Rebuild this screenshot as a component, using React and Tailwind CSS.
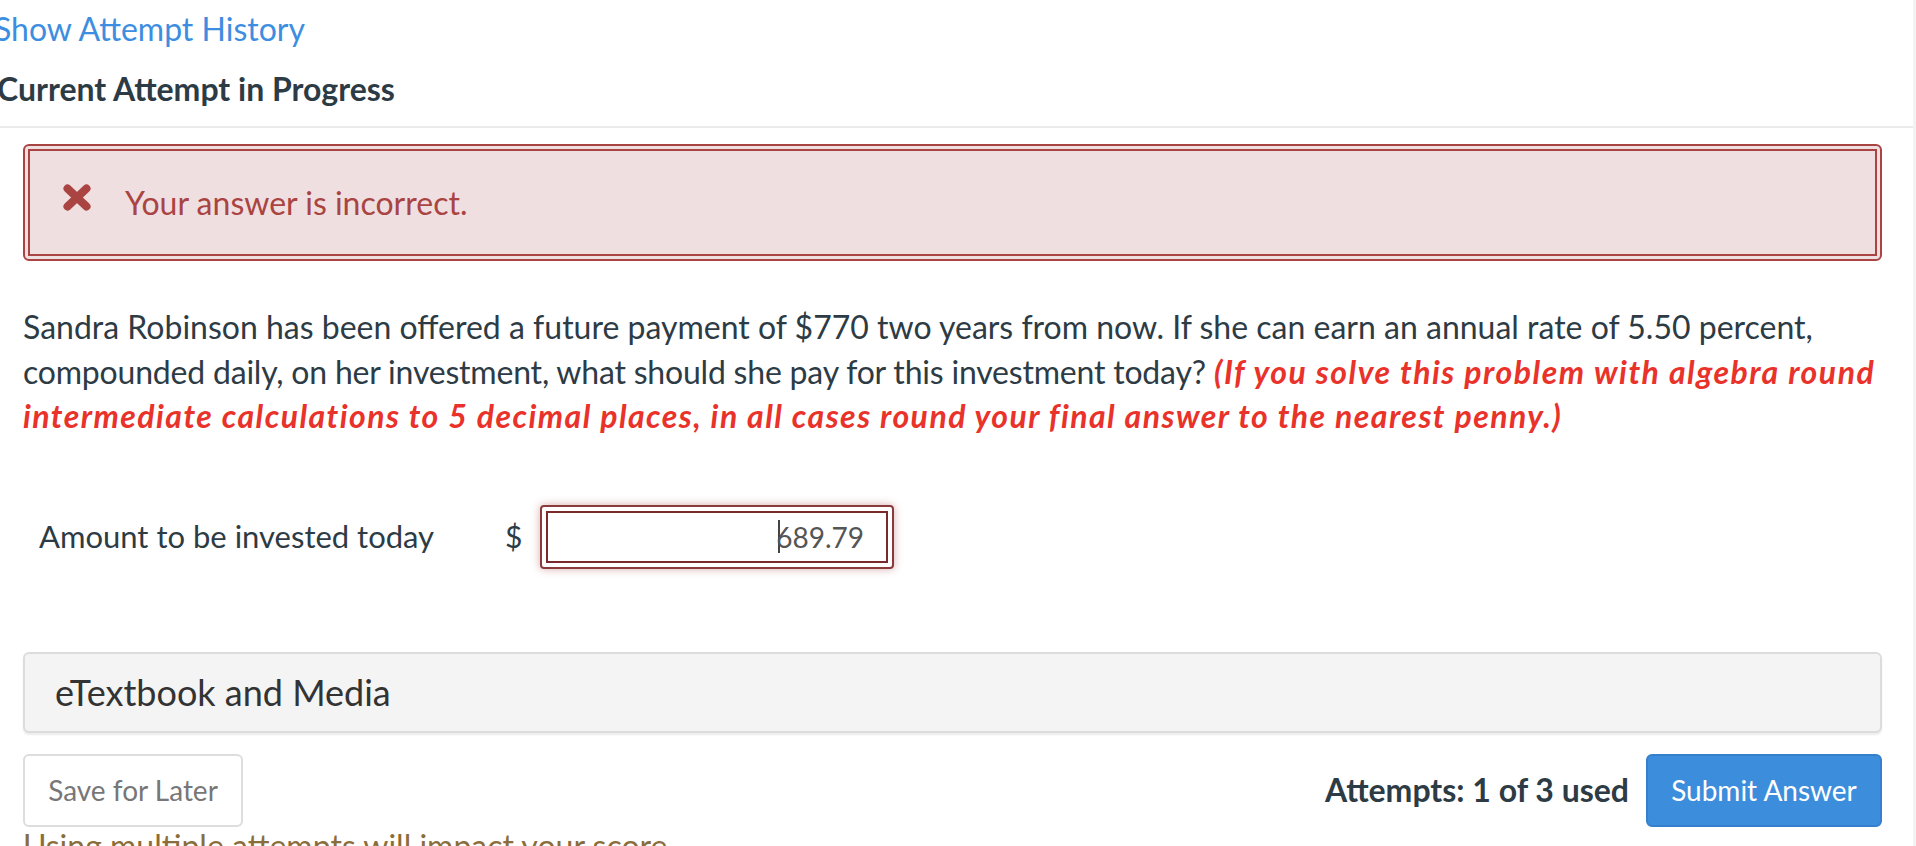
import React from 'react';

const TimesIcon = () => (
  <svg width="30" height="27" viewBox="0 0 30 27" className="mb-[10px] shrink-0">
    <path d="M5.5 4.5 L24.5 22.5 M24.5 4.5 L5.5 22.5" stroke="#a94442" strokeWidth="8" strokeLinecap="round" />
  </svg>
);

const App = () => {
  return (
    <div className="flex min-h-screen bg-white font-['Lato','Open_Sans',sans-serif] text-[#2d3b45]">
      <div className="flex-1 overflow-hidden">
        {/* Header */}
        <div className="-ml-[6px] pt-[8px] text-[32px] leading-[42px] text-[#3d8ee0]">Show Attempt History</div>
        <div className="-ml-[3px] mt-[18px] text-[32px] font-bold leading-[42px]">Current Attempt in Progress</div>
        <div className="mt-[16px] h-[2px] bg-[#ebebeb]" />

        <div className="pl-[23px] pr-[31px]">
          {/* Error alert */}
          <div className="mt-[16px] rounded-[6px] border-2 border-[#a94442] bg-[#f0dfe0] p-[3px]">
            <div className="flex h-[107px] items-center gap-[33px] border-2 border-[#a94442] pl-[32px] text-[32px] text-[#a94442]">
              <TimesIcon />
              <span>Your answer is incorrect.</span>
            </div>
          </div>

          {/* Question */}
          <p className="mt-[44px] whitespace-nowrap text-[32px] leading-[44.5px]">
            Sandra Robinson has been offered a future payment of $770 two years from now. If she can earn an annual rate of 5.50 percent,
            <br />
            <span className="tracking-[-0.2px]">compounded daily, on her investment, what should she pay for this investment today?</span>{' '}
            <span className="font-bold italic tracking-[1.5px] text-[#e8322a]">(If you solve this problem with algebra round</span>
            <br />
            <span className="font-bold italic tracking-[1.45px] text-[#e8322a]">
              intermediate calculations to 5 decimal places, in all cases round your final answer to the nearest penny.)
            </span>
          </p>

          {/* Answer row */}
          <div className="mt-[66px] flex items-center">
            <div className="w-[482px] pl-[16px] text-[31px]">Amount to be invested today</div>
            <div className="w-[35px] text-[30px]">$</div>
            <div className="h-[64px] w-[354px] rounded-[4px] border-2 border-[#8a3a3a] p-[4px] shadow-[0_0_9px_rgba(169,68,66,0.45)]">
              <div className="flex h-full items-center justify-end border-2 border-[#7a2a2a] pr-[22px] text-[28px] text-[#555]">
                <span className="mr-[-4px] h-[33px] w-[2px] bg-[#444]" />
                <span>689.79</span>
              </div>
            </div>
          </div>

          {/* eTextbook */}
          <div className="mt-[83px] flex h-[81px] items-center rounded-[6px] border-2 border-[#dcdcdc] bg-[#f4f4f4] pl-[30px] text-[36px] text-[#333] shadow-[0_2px_2px_rgba(0,0,0,0.08)]">
            eTextbook and Media
          </div>

          {/* Actions */}
          <div className="mt-[21px] flex items-center justify-between">
            <button className="h-[73px] w-[220px] rounded-[6px] border-2 border-[#dddddd] bg-white text-[28px] text-[#777]">
              Save for Later
            </button>
            <div className="flex items-center gap-[17px]">
              <span className="text-[32px] font-bold text-[#2d3b45]">Attempts: 1 of 3 used</span>
              <button className="h-[73px] w-[236px] rounded-[6px] border-2 border-[#3580cc] bg-[#3d8ddd] text-[28px] text-white">
                Submit Answer
              </button>
            </div>
          </div>
          <div className="-mt-[2px] text-[32px] leading-[42px] text-[#8a6d3b]">Using multiple attempts will impact your score.</div>
        </div>
      </div>
      <div className="w-[3px] bg-[#f3f3f3]" />
    </div>
  );
};

export default App;
